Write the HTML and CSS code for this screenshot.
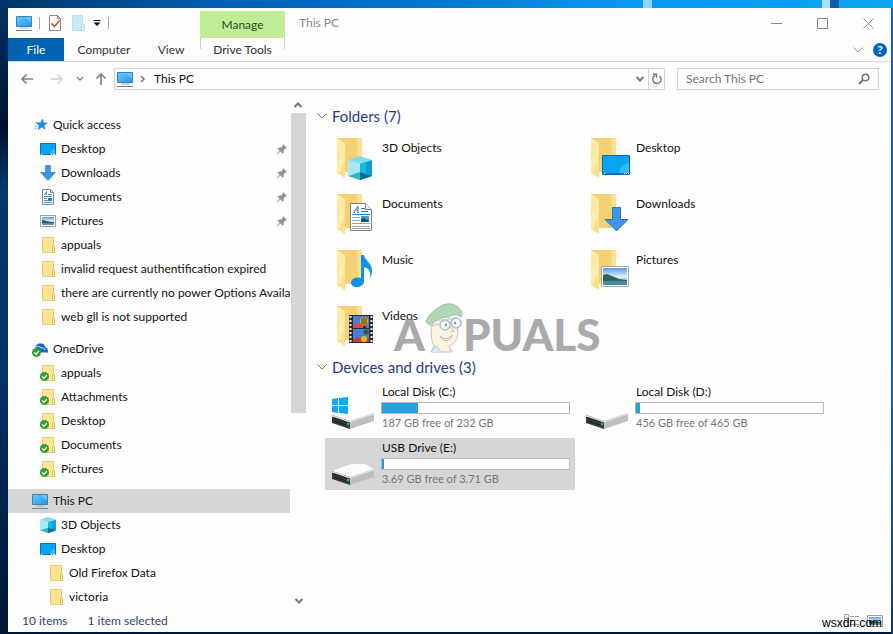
FILE: index.html
```html
<!DOCTYPE html>
<html lang="en">
  <head>
    <meta charset="UTF-8" />
    <meta name="viewport" content="width=device-width, initial-scale=1.0" />
    <title>This PC</title>
    <link rel="stylesheet" href="styles.css">
  </head>
  <body>
    <svg class="sprite" aria-hidden="true">
      <defs>
        <linearGradient id="screen" x1="0" y1="0" x2="1" y2="1">
          <stop offset="0" stop-color="#6cc9fa" />
          <stop offset="1" stop-color="#1d96e6" />
        </linearGradient>
        <linearGradient id="sky" x1="0" y1="0" x2="0" y2="1">
          <stop offset="0" stop-color="#5a9be6" />
          <stop offset="0.5" stop-color="#d8effa" />
          <stop offset="1" stop-color="#5f93b5" />
        </linearGradient>
        <linearGradient id="flap" x1="0" y1="0" x2="0" y2="1">
          <stop offset="0" stop-color="#fdefae" />
          <stop offset="1" stop-color="#fbdc80" />
        </linearGradient>
      </defs>

      <!-- small icons, 16x16 -->
      <symbol id="pc" viewBox="0 0 16 16">
        <path d="M0.5 1.5h15v10h-15z" fill="url(#screen)" stroke="#3f82ad" />
        <path d="M9 2h6v6z" fill="#8fd6fb" opacity="0.5" />
        <path d="M4 13h8" stroke="#9fb4c0" />
        <path d="M0 15.5h16" stroke="#6e8494" />
      </symbol>
      <symbol id="star" viewBox="-3 -1 19 19">
        <path d="M9.500 1.500l1.200 4.500h4.300l-3.700 2.800 1.200 4.700-4-2.500-4 3 1-4.900-3-2.600 4.600-.3z" fill="#1b93e0" stroke="#0f78c4" stroke-width="0.600" />
        <path d="M1 5.500h5M0 10.500h4M0 13h3" stroke="#4cb2ee" />
      </symbol>
      <symbol id="desktop" viewBox="0 0 16 16">
        <path d="M0.500 2.500h15v11h-15z" fill="#0aa2f3" stroke="#0a71b4" />
        <path d="M10 13c0-3 2-5 5-5v5z" fill="#3ab8fa" />
        <path d="M1 13.500h1M11 13.500h1M13 13.500h2" stroke="#fff" />
      </symbol>
      <symbol id="down" viewBox="0 0 16 16">
        <path d="M5.500 0.500h5v7h5L8 15.500.5 7.500h5z" fill="#3f94e2" stroke="#3181cb" stroke-width="0.700" />
      </symbol>
      <symbol id="doc" viewBox="0 0 16 16">
        <path d="M2.500 0.500h8l3 3v12h-11z" fill="#fff" stroke="#858b91" />
        <path d="M10.500 0.500v3h3" fill="none" stroke="#858b91" />
        <path d="M4.500 6L6.500 2.500v3.500M8 5.500h4M4 7.500h8M4 9.500h3M4 11.500h8M4 13.500h8" fill="none" stroke="#3c94d5" />
        <path d="M8 9h4v3h-4z" fill="#2d7fb6" />
      </symbol>
      <symbol id="picture" viewBox="0 0 16 16">
        <path d="M0.500 2.500h15v11h-15z" fill="#fff" stroke="#9aa2a8" />
        <path d="M2 4h12v8H2z" fill="url(#sky)" />
        <path d="M2 7c3 0 5 2 12 2v1.500H2z" fill="#2c5c68" />
      </symbol>
      <symbol id="folder" viewBox="0 0 16 16">
        <path d="M2.500 0.500h11v15h-11z" fill="#fee494" stroke="#ecca63" />
        <path d="M12.500 9.500h2v6h-2z" fill="#fdeeae" stroke="#e5bd48" />
      </symbol>
      <symbol id="tick" viewBox="0 0 16 16">
        <circle cx="4.500" cy="11.500" r="4.500" fill="#37a02d" />
        <path d="M2.300 11.500l1.700 1.700 3-3.200" fill="none" stroke="#fff" stroke-width="1.300" />
      </symbol>
      <symbol id="cloud" viewBox="0 0 16 16">
        <path d="M3 8c0-4 3-6 6-5.500 3 0 4 2 4.500 4 2 .5 2.500 2 2.500 5H4z" fill="#0c6cc4" />
        <path d="M2 8c2-3 5-3.500 7-1 2-.6 4 .5 4 2" fill="none" stroke="#fff" stroke-width="0.800" />
      </symbol>
      <symbol id="cube" viewBox="0 0 24 24">
        <path d="M12 0l12 4-12 4L0 4z" fill="#7fdcf0" />
        <path d="M0 4l12 4v16L0 20z" fill="#a8e8f0" />
        <path d="M12 8l12-4v16l-12 4z" fill="#0a9fd8" />
        <path d="M0 20l12-4v8z" fill="#2cbabc" />
        <path d="M12 16l12 4-12 4z" fill="#056a94" />
        <path d="M12 8l6-2v12l-6-2z" fill="#18b7dc" />
      </symbol>
      <symbol id="pin" viewBox="0 0 12 12">
        <path d="M7 1l4 4-1.500.5-2 2 .3 2L6.500 10.700 4.300 8.500 1 11.500.5 11l3-3.300L1.400 5.500 3 4.400l2 .1 1.700-1.700z" fill="#8b979f" />
      </symbol>
      <symbol id="chev-down" viewBox="0 0 12 12">
        <path d="M1.500 3.500L6 8l4.500-4.500" fill="none" stroke="currentColor" />
      </symbol>
      <symbol id="chev-bold" viewBox="0 0 12 12">
        <path d="M2.500 4L6 7.500 9.500 4" fill="none" stroke="currentColor" stroke-width="2" />
      </symbol>

      <!-- large icons, 50x52 -->
      <symbol id="big-folder" viewBox="0 0 50 52">
        <path d="M6 0h25v34H6z" fill="#f4d271" />
        <path d="M26 0h5v34h-4z" fill="#f8df91" />
        <path d="M6 0l8 5v35l-8-5z" fill="url(#flap)" />
        <path d="M6 23l7-12v12l-5 12-2-1z" fill="#fff0b8" opacity="0.700" />
      </symbol>
      <symbol id="drive" viewBox="0 0 50 52">
        <path d="M1 33l18 6v8L1 41z" fill="#343a37" />
        <path d="M19 39l24-8v8l-24 8z" fill="#bdbfc0" />
        <path d="M1 33l18 6 24-8v1.500L19 40.500 1 34.500z" fill="#dcdedf" />
        <path d="M3 36l12 4M3 39l12 4" stroke="#1a1d1b" />
        <circle cx="17" cy="42" r="1.300" fill="#2fbf4a" />
      </symbol>
    </svg>

    <div class="window">
      <header class="titlebar">
        <div class="quick">
          <svg class="icon"><use href="#pc" /></svg>
          <span class="sep"></span>
          <button class="plain" aria-label="Properties">
            <svg class="icon" viewBox="0 0 16 16">
              <path d="M2.500 0.500h8l3 3v12h-11z" fill="#fff" stroke="#8c8c8c" />
              <path d="M10.500 0.500v3h3" fill="none" stroke="#8c8c8c" />
              <path d="M4.500 8.500l3 3 5-6" fill="none" stroke="#e0562b" stroke-width="1.800" />
            </svg>
          </button>
          <button class="plain" aria-label="New folder">
            <svg class="icon" viewBox="0 0 16 16">
              <path d="M2.500 0.500h10v15h-10z" fill="#cdeaf3" stroke="#bcdfeb" />
              <path d="M11.500 9.500h3v6h-3z" fill="#e2f4f9" stroke="#b4dbe8" />
            </svg>
          </button>
          <button class="plain caret" aria-label="Customize toolbar">
            <svg width="8" height="8" viewBox="0 0 8 8"><path d="M0.500 1.500h7" stroke="#111" /><path d="M0.500 3.500h7L4 7z" fill="#111" /></svg>
          </button>
          <span class="sep"></span>
        </div>
        <div class="context-label">Manage</div>
        <div class="caption">This PC</div>
        <div class="window-buttons">
          <button aria-label="Minimize"><svg width="11" height="11"><path d="M0 5.500h11" stroke="#888" /></svg></button>
          <button aria-label="Maximize"><svg width="11" height="11"><path d="M0.500 0.500h10v10h-10z" fill="none" stroke="#888" /></svg></button>
          <button aria-label="Close"><svg width="11" height="11"><path d="M0.500 0.500l10 10M10.500 0.500l-10 10" stroke="#999" /></svg></button>
        </div>
      </header>

      <nav class="ribbon">
        <button class="tab file">File</button>
        <button class="tab computer">Computer</button>
        <button class="tab view">View</button>
        <button class="tab tools">Drive Tools</button>
        <div class="ribbon-end">
          <button class="plain" aria-label="Expand the ribbon"><svg class="small light"><use href="#chev-down" /></svg></button>
          <button class="help" aria-label="Help">?</button>
        </div>
      </nav>

      <div class="address-row">
        <div class="nav-buttons">
          <button class="plain" aria-label="Back"><svg width="14" height="12" viewBox="0 0 14 12"><path d="M13 6H2M6.500 1.500L2 6l4.500 4.500" fill="none" stroke="#808080" stroke-width="1.600" /></svg></button>
          <button class="plain forward" aria-label="Forward"><svg width="14" height="12" viewBox="0 0 14 12"><path d="M1 6h11M7.500 1.500L12 6l-4.500 4.500" fill="none" stroke="#cfcfcf" stroke-width="1.300" /></svg></button>
          <button class="plain recent" aria-label="Recent locations"><svg width="8" height="8" viewBox="2 2 8 8"><path d="M3 4l3 3 3-3" fill="none" stroke="#888" stroke-width="1.500" /></svg></button>
          <button class="plain" aria-label="Up"><svg width="12" height="14" viewBox="0 0 12 14"><path d="M6 13V2M1.500 6.500L6 2l4.500 4.500" fill="none" stroke="#808080" stroke-width="1.700" /></svg></button>
        </div>
        <div class="address">
          <svg class="icon"><use href="#pc" /></svg>
          <svg class="crumb" width="6" height="8" viewBox="0 0 6 8"><path d="M1 1l3 3-3 3" fill="none" stroke="#777" stroke-width="1.500" /></svg>
          <a href="#">This PC</a>
          <button class="plain drop" aria-label="Previous locations"><svg class="small"><use href="#chev-bold" /></svg></button>
          <button class="plain refresh" aria-label="Refresh">
            <svg class="small" viewBox="0 0 12 12"><path d="M8.500 3A4.200 4.200 0 1 1 4 2.600" fill="none" stroke="#777" stroke-width="1.400" /><path d="M2 1.200h3.500v3.500" fill="none" stroke="#777" stroke-width="1.400" /></svg>
          </button>
        </div>
        <label class="search">
          <input type="search" placeholder="Search This PC" aria-label="Search This PC">
          <svg class="small" viewBox="0 0 12 12"><circle cx="7.500" cy="4.500" r="3.300" fill="none" stroke="#777" stroke-width="1.500" /><path d="M5 7L1 11" stroke="#777" stroke-width="2" /></svg>
        </label>
      </div>

      <div class="main">
        <aside class="tree">
          <ul>
            <li><svg class="icon"><use href="#star" /></svg>Quick access</li>
            <li class="l1"><svg class="icon"><use href="#desktop" /></svg>Desktop<svg class="pin"><use href="#pin" /></svg></li>
            <li class="l1"><svg class="icon"><use href="#down" /></svg>Downloads<svg class="pin"><use href="#pin" /></svg></li>
            <li class="l1"><svg class="icon"><use href="#doc" /></svg>Documents<svg class="pin"><use href="#pin" /></svg></li>
            <li class="l1"><svg class="icon"><use href="#picture" /></svg>Pictures<svg class="pin"><use href="#pin" /></svg></li>
            <li class="l1"><svg class="icon"><use href="#folder" /></svg>appuals</li>
            <li class="l1"><svg class="icon"><use href="#folder" /></svg>invalid request authentification expired</li>
            <li class="l1"><svg class="icon"><use href="#folder" /></svg>there are currently no power Options Availa</li>
            <li class="l1"><svg class="icon"><use href="#folder" /></svg>web gll is not supported</li>
          </ul>
          <ul>
            <li><svg class="icon"><use href="#cloud" /><use href="#tick" /></svg>OneDrive</li>
            <li class="l1"><svg class="icon"><use href="#folder" /><use href="#tick" /></svg>appuals</li>
            <li class="l1"><svg class="icon"><use href="#folder" /><use href="#tick" /></svg>Attachments</li>
            <li class="l1"><svg class="icon"><use href="#folder" /><use href="#tick" /></svg>Desktop</li>
            <li class="l1"><svg class="icon"><use href="#folder" /><use href="#tick" /></svg>Documents</li>
            <li class="l1"><svg class="icon"><use href="#folder" /><use href="#tick" /></svg>Pictures</li>
          </ul>
          <ul>
            <li class="selected"><svg class="icon"><use href="#pc" /></svg>This PC</li>
            <li class="l1"><svg class="icon"><use href="#cube" /></svg>3D Objects</li>
            <li class="l1"><svg class="icon"><use href="#desktop" /></svg>Desktop</li>
            <li class="l2"><svg class="icon"><use href="#folder" /></svg>Old Firefox Data</li>
            <li class="l2"><svg class="icon"><use href="#folder" /></svg>victoria</li>
          </ul>
        </aside>

        <div class="scrollbar">
          <button class="plain up" aria-label="Scroll up"><svg class="small"><use href="#chev-bold" /></svg></button>
          <div class="thumb"></div>
          <div class="track"></div>
          <button class="plain" aria-label="Scroll down"><svg class="small"><use href="#chev-bold" /></svg></button>
        </div>

        <main class="content">
          <section class="folders">
            <h2><svg class="small"><use href="#chev-down" /></svg>Folders (7)</h2>
            <div class="tiles">
              <div class="tile">
                <svg class="big"><use href="#big-folder" /><use href="#cube" x="17" y="18" width="24" height="24" /></svg>
                <div class="name">3D Objects</div>
              </div>
              <div class="tile">
                <svg class="big">
                  <use href="#big-folder" />
                  <path d="M17.500 17.500h27v19h-27z" fill="#08a5f5" stroke="#0a6ba8" />
                  <path d="M34 35c1-6 5-9 10-10v10z" fill="#38b7fb" />
                  <path d="M18 35.500h26" stroke="#0878bd" />
                  <path d="M19 35.500h1M39 35.500h1M41 35.500h1M43 35.500h1" stroke="#fff" />
                </svg>
                <div class="name">Desktop</div>
              </div>
              <div class="tile">
                <svg class="big">
                  <use href="#big-folder" />
                  <path d="M19.500 9.500h15l6 6v21h-21z" fill="#fff" stroke="#7c8288" />
                  <path d="M34.500 9.500v6h6" fill="#eee" stroke="#7c8288" />
                  <path d="M22 18.500h2M23 18l4-6v6M24 16h3M26 18.500h2M30 14.500h4M30 17.500h7M21 20.500h18" fill="none" stroke="#2583cd" />
                  <path d="M21 23.500h8M21 26.500h8M21 29.500h18M21 32.500h18M21 34.500h18" stroke="#9da2a6" />
                  <path d="M30 22h8v6h-8z" fill="#4a9ad0" />
                  <path d="M30 25l3-1 5 3v1h-8z" fill="#1b4f70" />
                </svg>
                <div class="name">Documents</div>
              </div>
              <div class="tile">
                <svg class="big"><use href="#big-folder" /><path d="M27.500 13.500h8v12h7.500L31.500 37 20 25.500h7.500z" fill="#3c96e6" stroke="#2f74b8" /></svg>
                <div class="name">Downloads</div>
              </div>
              <div class="tile">
                <svg class="big">
                  <use href="#big-folder" />
                  <path d="M30 5h3c0 5 9 8 8 17-.5 3-1 4-2 6 1-6-1-10-6-11v14c0 4-4 6-7.500 6S20 35 20 32.500s3-5 6.500-5c1.500 0 2.500 0 3.500.7z" fill="#0c93ee" />
                </svg>
                <div class="name">Music</div>
              </div>
              <div class="tile">
                <svg class="big">
                  <use href="#big-folder" />
                  <path d="M16.500 16.500h27v20h-27z" fill="#fff" stroke="#a3a8ac" />
                  <path d="M18 18h24v17H18z" fill="url(#sky)" />
                  <path d="M18 25l4-1 5 2 7 3 8 1v1H18z" fill="#2d6554" />
                  <path d="M18 31h24v4H18z" fill="#4e87ad" />
                </svg>
                <div class="name">Pictures</div>
              </div>
              <div class="tile">
                <svg class="big">
                  <use href="#big-folder" />
                  <path d="M18 9h24v28H18z" fill="#2b2b2e" />
                  <path d="M19.500 10v26M40.500 10v26" stroke="#e8e8e8" stroke-width="2" stroke-dasharray="2 2" />
                  <path d="M22 10h16v12H22zM22 23h16v13H22z" fill="#4c7fd6" />
                  <path d="M22 19l7-2 9 4v1H22z" fill="#c9524f" />
                  <circle cx="33" cy="15" r="4" fill="#e8bb1c" />
                  <path d="M33 11v8M31 12v6M35 12v6" stroke="#37321c" />
                  <path d="M32 20h3v2h-3z" fill="#3b2b17" />
                  <circle cx="35" cy="26" r="2.500" fill="#33582c" />
                  <path d="M22 33l6-2 5 3 5-2v4H22z" fill="#b8443e" />
                  <circle cx="33" cy="33" r="3" fill="#e8bb1c" />
                </svg>
                <div class="name">Videos</div>
              </div>
            </div>
            <div class="watermark" aria-hidden="true">
              <span>A</span>
              <svg width="38" height="50" viewBox="0 0 38 50">
                <path d="M8 18c-3 8-2 20 1 25l-3 6h20l-2-6c6-2 9-8 9-14l-2-14z" fill="#fbf0d0" stroke="#a7aeb8" />
                <path d="M6 49l5-6 5 6M24 45l4 4" fill="#cfe3f5" stroke="#9fb6cc" />
                <path d="M1 19C3 11 12 5 18 2c8-3 17 0 19 9l-1 3c-4-3-8-3-12 0-7 0-12 2-16 6-3 2-6 1-7-1z" fill="#8fcb98" stroke="#7b9c84" />
                <circle cx="20" cy="22" r="5" fill="#eef6fb" stroke="#8ba5c0" stroke-width="1.500" />
                <circle cx="31" cy="20" r="5" fill="#eef6fb" stroke="#8ba5c0" stroke-width="1.500" />
                <path d="M1 19l5 4 8-2M25 21h1M25 24l4 4-4 1" fill="none" stroke="#98a5b2" />
                <circle cx="21" cy="22" r="1.200" fill="#667" />
                <circle cx="30" cy="20" r="1.200" fill="#667" />
                <path d="M15 33c4 4 9 3 12-1-1 6-8 8-12 1z" fill="#fff" stroke="#9b9b95" />
              </svg>
              <span>PUALS</span>
            </div>
          </section>

          <section class="drives">
            <h2><svg class="small"><use href="#chev-down" /></svg>Devices and drives (3)</h2>
            <div class="tiles">
              <div class="tile">
                <svg class="big">
                  <use href="#drive" />
                  <path d="M1 17l6-1v7H1zM8 16l9-1v8H8zM1 24h6v7l-6-1zM8 24h9v8l-9-1z" fill="#0aa9f4" />
                </svg>
                <div class="info">
                  <div class="name">Local Disk (C:)</div>
                  <div class="bar"><div class="used" style="width: 19%"></div></div>
                  <div class="free">187 GB free of 232 GB</div>
                </div>
              </div>
              <div class="tile">
                <svg class="big"><use href="#drive" /></svg>
                <div class="info">
                  <div class="name">Local Disk (D:)</div>
                  <div class="bar"><div class="used" style="width: 2%"></div></div>
                  <div class="free">456 GB free of 465 GB</div>
                </div>
              </div>
              <div class="tile selected">
                <svg class="big"><path d="M1 33l19-7h14l9 5-24 9z" fill="#fbfbfb" /><use href="#drive" /></svg>
                <div class="info">
                  <div class="name">USB Drive (E:)</div>
                  <div class="bar"><div class="used" style="width: 1%"></div></div>
                  <div class="free">3.69 GB free of 3.71 GB</div>
                </div>
              </div>
            </div>
          </section>
        </main>
      </div>

      <footer class="statusbar">
        <span>10 items</span>
        <span>1 item selected</span>
        <div class="view-modes">
          <button class="plain" aria-label="Details view">
            <svg width="16" height="14" viewBox="0 0 16 14"><path d="M0.500 0.500h4v4h-4zM0.500 4.500h4v4h-4zM0.500 8.500h4v4h-4z" fill="#fff" stroke="#a59fae" /><path d="M6 2.500h4M11 2.500h4M6 6.500h4M11 6.500h4M6 10.500h4M11 10.500h4" stroke="#9a9a9a" /></svg>
          </button>
          <button class="plain" aria-label="Large icons view"><svg class="icon"><use href="#picture" /></svg></button>
        </div>
        <div class="site">wsxdn.com</div>
      </footer>
    </div>
  </body>
</html>
```

FILE: styles.css
```css
* {
  box-sizing: border-box;
  margin: 0;
  padding: 0;
}

body {
  display: flex;
  min-height: 100vh;
  padding: 8px 2px 2px 8px;
  font: 12px/16px Lato, "Segoe UI", sans-serif;
  color: #111;
  background:
    linear-gradient(90deg, transparent 72%, #8fd6f8 72%, #8fd6f8 73%, transparent 73%, transparent 92%, #a5e0fa 92%, #a5e0fa 93%, #0a5cb0 93%, #0a5cb0 94%, transparent 94%) top / 100% 8px no-repeat,
    linear-gradient(90deg, #003568, #0060b4 25%, #0073cf 45%, #0a98ee 70%, #0ba5f5) top / 100% 8px no-repeat,
    linear-gradient(#0b67b8, #0067b8 70%, #0a3c70) right / 2px 100% no-repeat,
    linear-gradient(#003568, #00102e 20%, #003a70 30%, #00306a 60%, #001534);
}

button,
input {
  font: inherit;
  color: inherit;
  background: none;
  border: 0;
}

a {
  color: inherit;
  text-decoration: none;
}

.sprite {
  position: absolute;
  width: 0;
  height: 0;
}

.icon {
  flex: none;
  display: block;
  width: 16px;
  height: 16px;
}

.small {
  flex: none;
  display: block;
  width: 12px;
  height: 12px;
  color: #777;
}

.light {
  color: #999;
}

.plain {
  display: flex;
  align-items: center;
  justify-content: center;
}

.window {
  flex: 1;
  min-width: 0;
  display: flex;
  flex-direction: column;
  background: #fdfdfd;
}

/* title bar */
.titlebar {
  display: flex;
  height: 30px;
}

.quick {
  display: flex;
  align-items: center;
  gap: 7px;
  width: 192px;
  padding-left: 8px;
}

.sep {
  width: 1px;
  height: 12px;
  background: #aaa;
}

.quick .caret {
  width: 8px;
}

.context-label {
  width: 85px;
  margin-top: 3px;
  line-height: 28px;
  text-align: center;
  color: #2f4a22;
  background: #bfed98;
}

.caption {
  flex: 1;
  padding-left: 14px;
  line-height: 29px;
  color: #888;
}

.window-buttons {
  display: flex;
}

.window-buttons button {
  display: flex;
  align-items: center;
  justify-content: center;
  width: 46px;
}

/* ribbon tabs */
.ribbon {
  display: flex;
  height: 24px;
  border-bottom: 1px solid #d5d6d8;
}

.tab {
  line-height: 23px;
  color: #333;
}

.file {
  width: 56px;
  color: #fff;
  background: #0063b1;
}

.computer {
  width: 80px;
}

.view {
  width: 54px;
}

.tools {
  width: 85px;
  margin-left: 2px;
  background:
    linear-gradient(#ccc, #ccc) left top / 1px 11px no-repeat,
    linear-gradient(#ccc, #ccc) right top / 1px 11px no-repeat;
}

.ribbon-end {
  display: flex;
  align-items: center;
  gap: 9px;
  margin-left: auto;
  padding-right: 4px;
}

.help {
  width: 14px;
  height: 14px;
  line-height: 14px;
  font-weight: bold;
  color: #fff;
  background: #0067b8;
  border-radius: 50%;
}

/* address row */
.address-row {
  display: flex;
  height: 35px;
  padding: 6px 12px 7px 0;
}

.nav-buttons {
  display: flex;
  align-items: center;
  width: 106px;
  padding-left: 12px;
}

.nav-buttons .forward {
  margin-left: 16px;
}

.nav-buttons .recent {
  margin: 0 11px 0 12px;
}

.address {
  flex: 1;
  display: flex;
  align-items: center;
  padding-left: 2px;
  border: 1px solid #d5d5d5;
}

.address .crumb {
  margin: 0 8px 0 7px;
}

.address .drop {
  margin-left: auto;
  width: 16px;
}

.address .refresh {
  align-self: stretch;
  width: 16px;
  border-left: 1px solid #d5d5d5;
}

.search {
  display: flex;
  align-items: center;
  width: 202px;
  margin-left: 12px;
  padding: 0 8px;
  border: 1px solid #d5d5d5;
}

.search input {
  flex: 1;
  min-width: 0;
  outline: 0;
}

.search input::placeholder {
  color: #777;
}

/* navigation tree */
.main {
  flex: 1;
  display: flex;
}

.tree {
  display: flex;
  flex-direction: column;
  gap: 8px;
  width: 282px;
  padding-top: 16px;
}

.tree ul {
  list-style: none;
}

.tree li {
  display: flex;
  align-items: center;
  gap: 5px;
  height: 24px;
  padding-left: 24px;
  white-space: nowrap;
  overflow: hidden;
}

.tree .l1 {
  padding-left: 32px;
}

.tree .l2 {
  padding-left: 40px;
}

.selected {
  background: #d5d6d6;
}

.pin {
  flex: none;
  width: 12px;
  height: 12px;
  margin: 0 2px 0 auto;
}

.scrollbar {
  display: flex;
  flex-direction: column;
  width: 15px;
  margin-left: 1px;
}

.scrollbar button {
  height: 16px;
}

.scrollbar .up {
  transform: rotate(180deg);
}

.thumb {
  flex: 5;
  background: #d3d4d4;
}

.track {
  flex: 3;
}

/* content */
.content {
  flex: 1;
  padding: 10px 0 0 19px;
}

.folders {
  position: relative;
}

.content h2 {
  display: flex;
  align-items: center;
  gap: 4px;
  height: 18px;
  margin: 0 0 6px -9px;
  font-size: 15px;
  font-weight: normal;
  color: #263c86;
}

.folders h2 {
  margin-bottom: 13px;
}

.tiles {
  display: grid;
  grid-template-columns: repeat(auto-fill, 250px);
  gap: 4px;
}

.tile {
  display: flex;
  height: 52px;
  padding: 0 5px 0 6px;
}

.big {
  flex: none;
  width: 50px;
  height: 52px;
}

.name {
  line-height: 20px;
  padding-left: 1px;
}

.info {
  flex: 1;
}

.bar {
  height: 12px;
  background: #fff;
  border: 1px solid #b5b6b6;
}

.used {
  height: 100%;
  background: #26a0da;
}

.free {
  font-size: 11px;
  line-height: 18px;
  padding-left: 1px;
  color: #777;
}

.watermark {
  position: absolute;
  left: 69px;
  bottom: 5px;
  display: flex;
  align-items: flex-end;
  font-size: 44px;
  font-weight: 900;
  line-height: 38px;
  color: #888;
  opacity: 0.7;
}

/* status bar */
.statusbar {
  position: relative;
  display: flex;
  align-items: center;
  gap: 20px;
  height: 23px;
  padding: 0 8px 0 14px;
  color: #2c4668;
}

.view-modes {
  display: flex;
  gap: 7px;
  margin-left: auto;
}

.site {
  position: absolute;
  right: 9px;
  bottom: 1px;
  font-family: "Liberation Sans", Arial, sans-serif;
  color: #000;
}
```
